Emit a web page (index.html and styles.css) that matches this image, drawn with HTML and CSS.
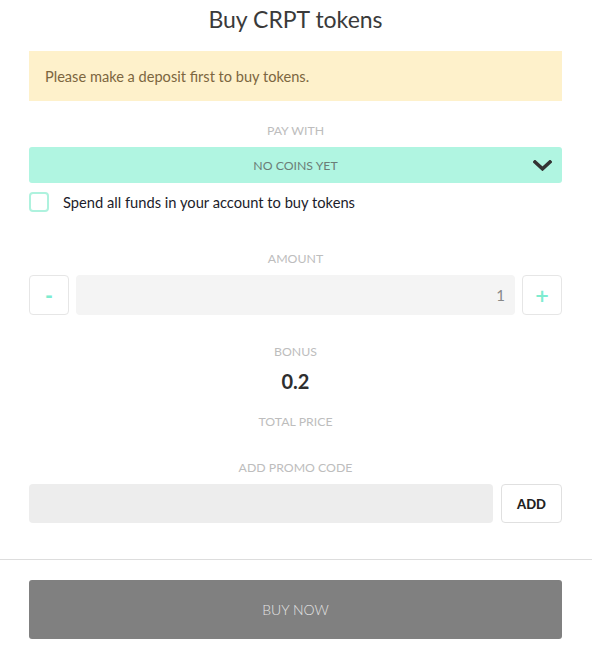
FILE: index.html
```html
<!DOCTYPE html>
<html lang="en">
<head>
    <meta charset="UTF-8">
    <meta name="viewport" content="width=device-width, initial-scale=1.0">
    <title>Buy CRPT tokens</title>
    <link rel="stylesheet" href="styles.css">
</head>
<body>
    <div class="buy-form">
        <h1 class="title">Buy CRPT tokens</h1>

        <div class="alert">Please make a deposit first to buy tokens.</div>

        <div class="label label-pay">PAY WITH</div>
        <div class="select">
            <span class="select-text">NO COINS YET</span>
            <svg class="chevron" width="19" height="11" viewBox="0 0 19 11">
                <polyline points="2,2 9.5,8.8 17,2" fill="none" stroke="#333" stroke-width="3.6" stroke-linecap="square" stroke-linejoin="miter"/>
            </svg>
        </div>

        <label class="checkbox-row">
            <span class="checkbox"></span>
            <span class="checkbox-text">Spend all funds in your account to buy tokens</span>
        </label>

        <div class="label label-amount">AMOUNT</div>
        <div class="amount-row">
            <button class="step-button">-</button>
            <div class="amount-input">1</div>
            <button class="step-button">+</button>
        </div>

        <div class="label label-bonus">BONUS</div>
        <div class="bonus-value">0.2</div>

        <div class="label label-total">TOTAL PRICE</div>

        <div class="label label-promo">ADD PROMO CODE</div>
        <div class="promo-row">
            <div class="promo-input"></div>
            <button class="add-button">ADD</button>
        </div>
    </div>

    <hr class="divider">

    <div class="buy-footer">
        <button class="buy-button">BUY NOW</button>
    </div>
</body>
</html>
```

FILE: styles.css
```css
* {
    margin: 0;
    padding: 0;
    box-sizing: border-box;
}

body {
    background: #fff;
    font-family: Lato, 'Open Sans', sans-serif;
    color: #222;
}

.buy-form {
    padding: 0 30px 0 29px;
}

.title {
    margin-top: 6px;
    font-size: 23px;
    line-height: 26px;
    font-weight: 400;
    color: #3a3a3a;
    text-align: center;
}

.alert {
    margin-top: 19px;
    height: 50px;
    padding: 0 16px;
    display: flex;
    align-items: center;
    background: #fef1cb;
    color: #7c6640;
    font-size: 14.6px;
}

.label {
    font-size: 12.3px;
    line-height: 14px;
    color: #bdbdbd;
    text-align: center;
}

.label-pay {
    margin-top: 23px;
}

.select {
    margin-top: 9px;
    height: 36px;
    border-radius: 3px;
    background: #b0f5e1;
    display: flex;
    align-items: center;
    position: relative;
}

.select-text {
    flex: 1;
    text-align: center;
    font-size: 12.3px;
    color: #6b7d77;
}

.chevron {
    position: absolute;
    right: 10px;
    top: 13px;
}

.checkbox-row {
    margin-top: 9px;
    display: flex;
    align-items: center;
    gap: 14px;
}

.checkbox {
    width: 20px;
    height: 20px;
    border: 2px solid #aef2de;
    border-radius: 4px;
}

.checkbox-text {
    font-size: 14.7px;
    color: #1c1c2a;
}

.label-amount {
    margin-top: 40px;
}

.amount-row {
    margin-top: 9px;
    display: flex;
    gap: 7px;
    height: 40px;
}

.step-button {
    width: 40px;
    height: 40px;
    background: #fff;
    border: 1px solid #e6e6e6;
    border-radius: 4px;
    color: #7eecd0;
    font-family: 'DejaVu Sans', sans-serif;
    font-size: 18px;
    font-weight: bold;
}

.amount-input {
    flex: 1;
    background: #f4f4f4;
    border-radius: 4px;
    display: flex;
    align-items: center;
    justify-content: flex-end;
    padding-right: 10px;
    font-size: 15px;
    color: #888;
}

.label-bonus {
    margin-top: 30px;
}

.bonus-value {
    margin-top: 13px;
    font-size: 20px;
    line-height: 18px;
    font-weight: 700;
    color: #2e2e2e;
    text-align: center;
}

.label-total {
    margin-top: 25px;
}

.label-promo {
    margin-top: 32px;
}

.promo-row {
    margin-top: 9px;
    display: flex;
    gap: 8px;
    height: 39px;
}

.promo-input {
    flex: 1;
    background: #ededed;
    border-radius: 4px;
}

.add-button {
    width: 61px;
    background: #fff;
    border: 1px solid #e0e0e0;
    border-radius: 4px;
    font-family: Lato, sans-serif;
    font-size: 13px;
    font-weight: 900;
    color: #222;
}

.divider {
    margin-top: 36px;
    border: none;
    border-top: 1px solid #dddddd;
}

.buy-footer {
    padding: 20px 30px 0 29px;
}

.buy-button {
    width: 100%;
    height: 59px;
    background: #808080;
    border: none;
    border-radius: 3px;
    color: #e4e4e4;
    font-family: Lato, sans-serif;
    font-size: 14px;
    font-weight: 300;
}
```
